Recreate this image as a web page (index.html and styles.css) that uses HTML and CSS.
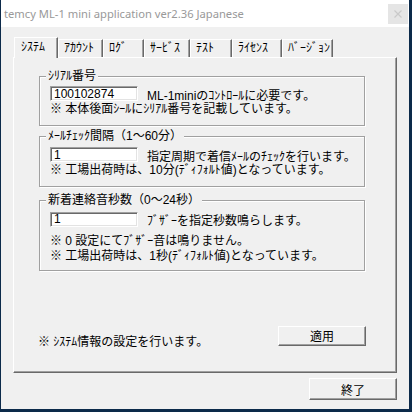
FILE: index.html
```html
<!DOCTYPE html>
<html lang="ja">
<head>
    <meta charset="UTF-8">
    <title>temcy ML-1 mini application</title>
    <link rel="stylesheet" href="styles.css">
</head>
<body>

    <div class="window">
        <!-- TITLE BAR -->
        <div class="titlebar">
            <span class="title">temcy ML-1 mini application ver2.36 Japanese</span>
            <span class="close">
                <svg width="8" height="8" viewBox="0 0 8 8"><path d="M0.5 0.5 L7.5 7.5 M7.5 0.5 L0.5 7.5" stroke="#c9c9c9" stroke-width="1.2"/></svg>
            </span>
        </div>

        <div class="client">
            <!-- TABS -->
            <div class="tabs">
                <div class="tab active">ｼｽﾃﾑ</div>
                <div class="tab">ｱｶｳﾝﾄ</div>
                <div class="tab">ﾛｸﾞ</div>
                <div class="tab">ｻｰﾋﾞｽ</div>
                <div class="tab">ﾃｽﾄ</div>
                <div class="tab">ﾗｲｾﾝｽ</div>
                <div class="tab">ﾊﾞｰｼﾞｮﾝ</div>
            </div>

            <div class="panel">
                <div class="group serial">
                    <span class="group-label">ｼﾘｱﾙ番号</span>
                    <div class="row">
                        <input type="text" class="edit" value="100102874">
                        <span>ML-1miniのｺﾝﾄﾛｰﾙに必要です。</span>
                    </div>
                    <div class="note">※ 本体後面ｼｰﾙにｼﾘｱﾙ番号を記載しています。</div>
                </div>

                <div class="group mail">
                    <span class="group-label">ﾒｰﾙﾁｪｯｸ間隔（1～60分）</span>
                    <div class="row">
                        <input type="text" class="edit" value="1">
                        <span>指定周期で着信ﾒｰﾙのﾁｪｯｸを行います。</span>
                    </div>
                    <div class="note">※ 工場出荷時は、10分(ﾃﾞｨﾌｫﾙﾄ値)となっています。</div>
                </div>

                <div class="group buzzer">
                    <span class="group-label">新着連絡音秒数（0～24秒）</span>
                    <div class="row">
                        <input type="text" class="edit" value="1">
                        <span>ﾌﾞｻﾞｰを指定秒数鳴らします。</span>
                    </div>
                    <div class="note first">※ 0 設定にてﾌﾞｻﾞｰ音は鳴りません。</div>
                    <div class="note">※ 工場出荷時は、1秒(ﾃﾞｨﾌｫﾙﾄ値)となっています。</div>
                </div>

                <div class="panel-footer">
                    <span>※ ｼｽﾃﾑ情報の設定を行います。</span>
                    <button class="btn apply">適用</button>
                </div>
            </div>

            <div class="footer">
                <button class="btn close-btn">終了</button>
            </div>
        </div>
    </div>

</body>
</html>
```

FILE: styles.css
```css
* { margin: 0; padding: 0; box-sizing: border-box; }

body {
    background: #0c2a4a;
    font-family: "Liberation Sans", "Noto Sans CJK JP", sans-serif;
    font-size: 12px;
    color: #000;
}

.window {
    margin-left: 1px;
    width: 408px;
    height: 409px;
    background: #f0f0f0;
    display: flex;
    flex-direction: column;
}

/* title bar */
.titlebar {
    height: 27px;
    background: #fff;
    display: flex;
    align-items: center;
    justify-content: space-between;
    padding: 0 1px 0 3px;
}

.title {
    font-family: "Noto Sans", sans-serif;
    font-size: 11.2px;
    color: #999;
}

.close {
    width: 20px;
    height: 20px;
    background: #e5e5e5;
    display: flex;
    align-items: center;
    justify-content: center;
}

.client {
    flex: 1;
    padding: 10px 12px 0 12px;
    display: flex;
    flex-direction: column;
}

/* tabs */
.tabs {
    display: flex;
    align-items: flex-end;
    height: 20px;
    margin-left: 1px;
    position: relative;
    z-index: 1;
}

.tab {
    height: 18px;
    line-height: 17px;
    padding-left: 5px;
    white-space: nowrap;
    border-top: 1px solid #fff;
    border-left: 1px solid #fff;
    border-right: 1px solid #696969;
    box-shadow: inset -1px 0 0 #a0a0a0;
}

.tab:nth-child(1) { width: 44px; }
.tab:nth-child(2) { width: 45px; }
.tab:nth-child(3) { width: 41px; }
.tab:nth-child(4) { width: 46px; }
.tab:nth-child(5) { width: 42px; }
.tab:nth-child(6) { width: 50px; }
.tab:nth-child(7) { width: 51px; }

.tab.active {
    height: 21px;
    margin-bottom: -1px;
    padding-left: 6px;
    line-height: 19px;
    background: #f0f0f0;
}

/* tab page */
.panel {
    height: 316px;
    border: 1px solid;
    border-color: #fff #696969 #696969 #fff;
    box-shadow: inset -1px -1px 0 #a0a0a0;
    padding: 18px 31px 0 25px;
    display: flex;
    flex-direction: column;
}

.group {
    position: relative;
    border: 1px solid #a0a0a0;
    box-shadow: inset 1px 1px 0 #fff, 1px 1px 0 #fff;
    padding: 9px 9px 9px 10px;
}

.group.mail { margin-top: 10px; padding-top: 10px; }
.group.buzzer { margin-top: 13px; padding-top: 10px; padding-bottom: 7px; }

.group-label {
    position: absolute;
    top: -9px;
    left: 6px;
    padding: 0 2px;
    line-height: 17px;
    background: #f0f0f0;
    white-space: nowrap;
}

.row {
    display: flex;
    align-items: center;
    gap: 9px;
    height: 15px;
    white-space: nowrap;
}

.row span { padding-top: 1px; }

.buzzer .row { height: 16px; }

.edit {
    width: 88px;
    height: 15px;
    font-family: "Liberation Sans", "Noto Sans CJK JP", sans-serif;
    font-size: 12px;
    line-height: 13px;
    padding: 0 3px;
    background: #fff;
    color: #000;
    border: 1px solid;
    border-color: #a0a0a0 #fff #fff #a0a0a0;
    box-shadow: inset 1px 1px 0 #696969, inset -1px -1px 0 #e3e3e3;
    outline: none;
}

.note {
    height: 15px;
    line-height: 17px;
    white-space: nowrap;
}

.note.first { margin-top: 6px; }

.panel-footer {
    margin-top: auto;
    margin-left: -1px;
    margin-right: -1px;
    padding-bottom: 23px;
    display: flex;
    align-items: center;
    justify-content: space-between;
}

.panel-footer span { padding-top: 10px; }

/* buttons */
.btn {
    width: 88px;
    height: 20px;
    font-family: "Liberation Sans", "Noto Sans CJK JP", sans-serif;
    font-size: 12px;
    color: #000;
    background: #f0f0f0;
    border: 1px solid;
    border-color: #fff #696969 #696969 #fff;
    box-shadow: inset -1px -1px 0 #a0a0a0;
}

.footer {
    display: flex;
    justify-content: flex-end;
    padding-top: 5px;
}

.close-btn { height: 22px; }
```
